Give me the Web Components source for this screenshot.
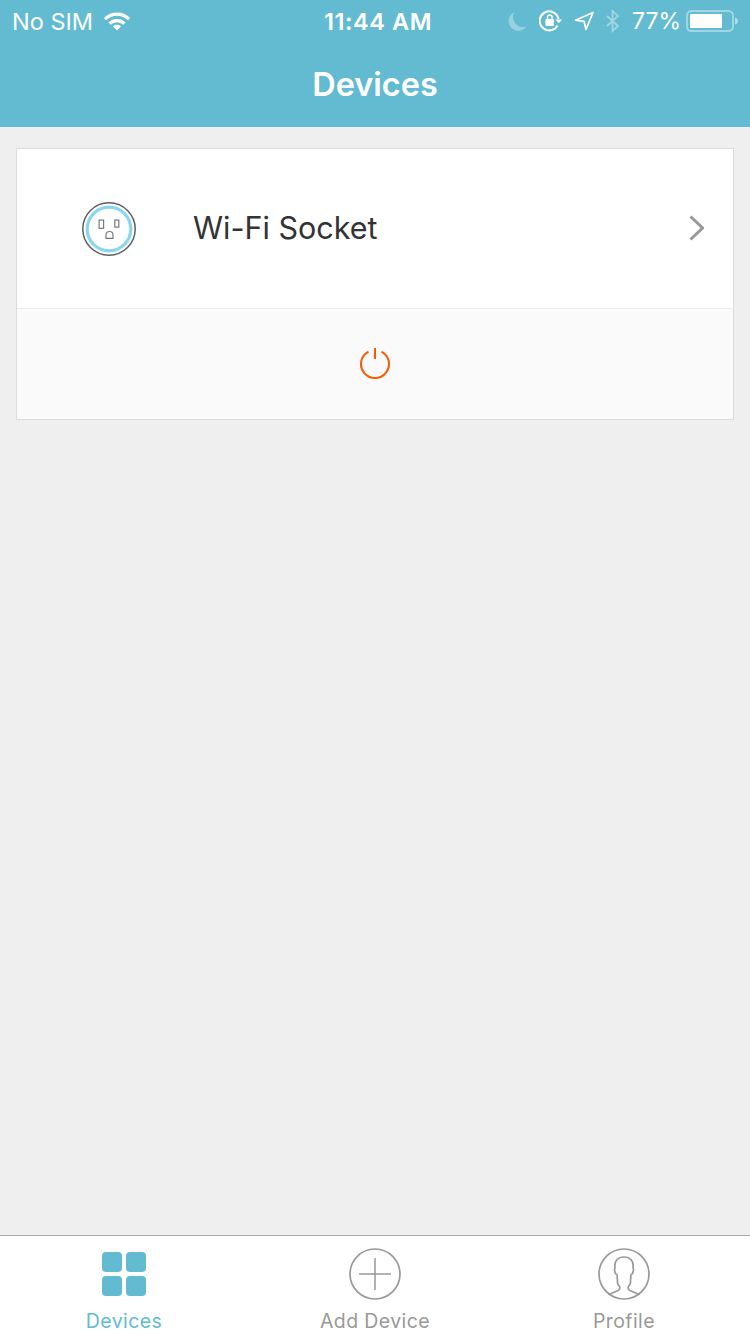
<!DOCTYPE html>
<html><head><meta charset="utf-8"><style>
html,body{margin:0;padding:0;height:100%}
body{width:750px;height:1334px;overflow:hidden;background:#efefef;font-family:Inter,sans-serif}
app-shell{height:1334px}
</style></head><body>
<app-shell>
  <status-bar slot="top"></status-bar>
  <nav-title slot="top">Devices</nav-title>
  <device-card name="Wi-Fi Socket"></device-card>
  <tab-bar slot="bottom"></tab-bar>
</app-shell>
<script>
function def(name, html){
  customElements.define(name, class extends HTMLElement{
    connectedCallback(){
      if(this.shadowRoot) return;
      const r=this.attachShadow({mode:'open'});
      r.innerHTML = typeof html==='function' ? html(this) : html;
    }
  });
}
def('app-shell',`<style>
:host{display:flex;flex-direction:column;width:750px;background:#efefef}
.top{display:block;background:#62bbd0}
main{flex:1;padding:21px 16px 0;box-sizing:border-box}
</style><div class="top"><slot name="top"></slot></div><main><slot></slot></main><slot name="bottom"></slot>`);

def('status-bar',`<style>
:host{display:grid;grid-template-columns:1fr auto 1fr;height:40px;align-items:center;color:#fff;font:400 23.500px/41px Inter,sans-serif}
.l{display:flex;align-items:center;padding-left:12px;gap:10px}
.c{font-weight:600;font-size:23.500px;letter-spacing:.6px;transform:translateX(3px)}
.r{display:flex;align-items:center;justify-content:flex-end}
svg{display:block;flex:none}
.pct{margin-left:11px;margin-right:5px;margin-top:1px;font-size:23px}
</style>
<div class="l"><span>No SIM</span>
<svg width="28" height="20" viewBox="0 0 28 20"><g fill="none" stroke="#fff" stroke-width="3.2"><path d="M2 8.2C9 1.5 19 1.5 26 8.2"/><path d="M6.5 12.6C11 8.5 17 8.5 21.5 12.6"/></g><path d="M10 15.2Q14 12.4 18 15.2L14 19.5Z" fill="#fff"/></svg></div>
<div class="c">11:44 AM</div>
<div class="r">
<svg width="20" height="20" viewBox="0 0 20 20" style="margin-right:12px;margin-left:-1px"><path d="M7.5 1A10 10 0 0 0 19.500 15.500A9.800 9.800 0 1 1 7.500 1Z" fill="#fff" opacity=".35"/></svg>
<svg width="24" height="22" viewBox="0 0 24 22" style="margin-right:11px"><path d="M18.500 15.500A9.500 9.500 0 1 1 19.500 9" fill="none" stroke="#fff" stroke-width="2"/><path d="M16.500 9.500H23L19.800 13.300Z" fill="#fff"/><rect x="6.500" y="9" width="8.500" height="7" rx="1" fill="#fff"/><path d="M8.500 9V7.300a2.300 2.300 0 0 1 4.600 0V9" fill="none" stroke="#fff" stroke-width="1.500"/></svg>
<svg width="20" height="20" viewBox="0 0 20 20" style="margin-right:11px"><path d="M19 1.500L1.500 9.200L10 10.300L12 18.500Z" fill="none" stroke="#fff" stroke-width="1.700" stroke-linejoin="round"/></svg>
<svg width="16" height="24" viewBox="0 0 16 24"><path d="M2 7L13 17L7.500 22V2L13 7L2 17" fill="none" stroke="#fff" stroke-width="1.800" opacity=".4"/></svg>
<span class="pct">77%</span>
<svg width="48" height="24" viewBox="0 0 48 24"><rect x="1" y="2" width="46" height="20" rx="4.500" fill="none" stroke="#fff" stroke-opacity=".4" stroke-width="2"/><rect x="4" y="5" width="32" height="14" rx="1" fill="#fff"/></svg>
<svg width="4" height="10" viewBox="0 0 4 10" style="margin-right:11px;margin-left:1px"><path d="M0 1.500Q3 2.500 3 5T0 8.500Z" fill="#fff" opacity=".5"/></svg>
</div>`);

def('nav-title',`<style>
:host{display:block;height:87px;box-sizing:border-box;text-align:center;color:#fff;font:600 32.500px/90px Inter,sans-serif}
</style><slot></slot>`);

def('socket-icon',`<style>:host{display:block;width:56px;height:56px;margin-top:1px}svg{display:block}</style>
<svg width="56" height="56" viewBox="0 0 56 56" fill="none">
<circle cx="28" cy="28" r="26.200" stroke="#5b5f63" stroke-width="1.500"/>
<circle cx="28" cy="28" r="21.800" stroke="#88d6f4" stroke-width="3.200"/>
<g stroke="#77797b" stroke-width="1.200">
<rect x="18.100" y="19.100" width="4.500" height="8.200"/>
<rect x="33.800" y="19.100" width="4" height="7"/>
<path d="M25 37.400V34a3.500 3.500 0 0 1 7 0v3.400Z"/>
</g></svg>`);

def('device-card',el=>`<style>
:host{display:block;background:#fff;border:1px solid #dcdcdc;box-sizing:border-box;width:718px;height:272px}
.row{display:flex;align-items:center;height:160px;padding-left:64px;padding-right:29px;box-sizing:border-box;border-bottom:1px solid #ececec}
.name{flex:1;margin-left:56px;margin-bottom:2px;font:400 30.500px/40px Inter,sans-serif;color:#333}
.chev{margin-top:-1px}
.pw{display:flex;align-items:center;justify-content:center;height:110px;background:#fafafa}
svg{display:block}
</style>
<div class="row"><socket-icon></socket-icon><span class="name">${el.getAttribute('name')}</span>
<svg class="chev" width="15" height="26" viewBox="0 0 15 26" fill="none"><path d="M1.500 1.500L13.500 13L1.500 24.500" stroke="#999" stroke-width="3"/></svg></div>
<div class="pw"><svg width="32" height="32" viewBox="0 0 32 32" fill="none" stroke="#fb5a05" stroke-width="2"><path d="M9.500 3.600A14 14 0 1 0 22.500 3.600"/><path d="M16 0V11"/></svg></div>`);

def('tab-item',el=>`<style>
:host{display:flex;flex-direction:column;align-items:center;color:${el.hasAttribute('active')?'#62bbd0':'#999'}}
.ic{height:52px;margin-top:12px;display:flex;align-items:center}
.t{font:400 19.500px/24px Inter,sans-serif;margin-top:9px;letter-spacing:.4px;white-space:nowrap}
</style><div class="ic"><slot></slot></div><div class="t">${el.getAttribute('label')}</div>`);

def('tab-bar',`<style>
:host{display:grid;grid-template-columns:248px 254px 244px;height:99px;background:#fff;border-top:1px solid #a9a9a9;box-sizing:border-box}
svg{display:block}
</style>
<tab-item label="Devices" active><svg width="44" height="44" viewBox="0 0 44 44" fill="#62bbd0"><rect width="20" height="20" rx="4"/><rect x="24" width="20" height="20" rx="4"/><rect y="24" width="20" height="20" rx="4"/><rect x="24" y="24" width="20" height="20" rx="4"/></svg></tab-item>
<tab-item label="Add Device"><svg width="52" height="52" viewBox="0 0 52 52" fill="none" stroke="#999"><circle cx="26" cy="26" r="25" stroke-width="1.700"/><path d="M26 10V42M10 26H42" stroke-width="1.500"/></svg></tab-item>
<tab-item label="Profile"><svg width="52" height="52" viewBox="0 0 52 52" fill="none" stroke="#999" stroke-width="1.700"><circle cx="26" cy="26" r="25"/><path d="M10.500 46.500L19 43Q23 41.500 21.500 38.500Q19 36 19.500 33L19 27Q17 26 16.500 22L17 19C16 13 20 9 26 9C32 9 36 13 35 19L35.500 22Q35 26 33 27L32.500 33Q33 36 30.500 38.500Q29 41.500 33 43L41.500 46.500"/></svg></tab-item>`);
</script>
</body></html>
